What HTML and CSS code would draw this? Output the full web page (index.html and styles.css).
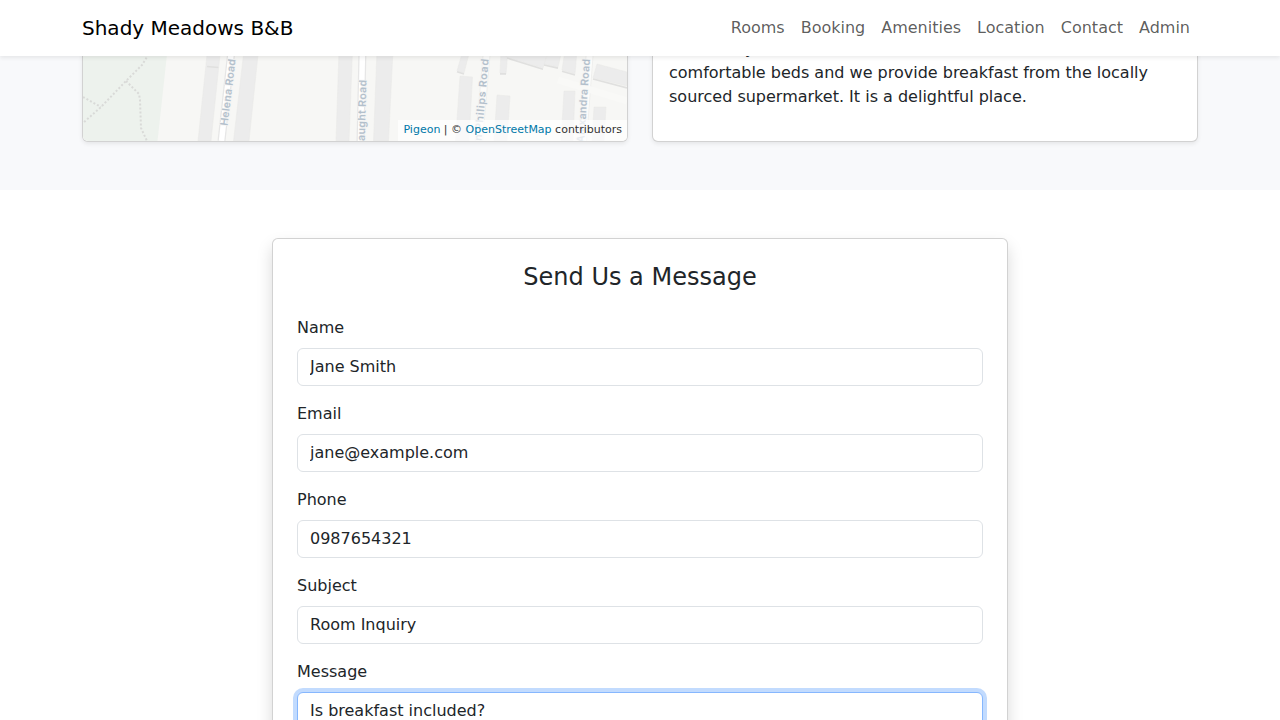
FILE: index.html
```html
<!DOCTYPE html>
<html lang="en">
<head>
<meta charset="utf-8">
<title>Shady Meadows B&amp;B</title>
<link rel="stylesheet" href="styles.css">
</head>
<body>
<nav class="navbar">
  <div class="container navbar-inner">
    <a class="brand">Shady Meadows B&amp;B</a>
    <div class="nav-links">
      <a>Rooms</a><a>Booking</a><a>Amenities</a><a>Location</a><a>Contact</a><a>Admin</a>
    </div>
  </div>
</nav>
<section class="location">
  <div class="container location-row">
    <div class="card map-card">
      <svg class="map" width="544" height="91" viewBox="83 50 544 91">
        <rect x="83" y="50" width="544" height="91" fill="#f7f7f5"/>
        <path d="M83 50H167.500L157.500 141H83Z" fill="#edf2ed"/>
        <g fill="none" stroke="#d9dad8" stroke-width="2" stroke-dasharray="2 2">
          <path d="M149 50L147 57L142 65L126 81L101 107L83 123"/>
          <path d="M126 81L139 94L140 100L141 128L147 141"/>
          <path d="M83 97L101 107"/>
        </g>
        <g fill="none">
          <path d="M231.500 50L221.500 141" stroke="#e6e6e6" stroke-width="8"/>
          <path d="M231.500 50L221.500 141" stroke="#fff" stroke-width="5.500"/>
          <path d="M362.500 50L360.500 141" stroke="#e6e6e6" stroke-width="8"/>
          <path d="M362.500 50L360.500 141" stroke="#fff" stroke-width="5.500"/>
          <path d="M487 50L479 141M590 50L583 141" stroke="#efefed" stroke-width="8"/>
          <path d="M487 50L479 141M590 50L583 141" stroke="#fcfcfb" stroke-width="6"/>
          <path d="M558 80L627 101" stroke="#f9f9f7" stroke-width="7"/>
        </g>
        <g fill="#ececec" stroke="#e8e8e7" stroke-width=".5">
          <path d="M207.500 50H220.500L211 141H198Z"/>
          <path d="M244 50H258.500L249 141H233.500Z"/>
          <path d="M339 50H352.500L349 141H336Z"/>
          <path d="M377 50H393L388.500 141H373.500Z"/>
          <path d="M463 50H470L464 73L457 71Z"/>
          <path d="M460 76L472.500 77L469 141H455.500Z"/>
          <path d="M501 50H508L506 74L500 73Z"/>
          <path d="M497 95L510 96L507 141H494Z"/>
          <path d="M506 50V57L543 68L549 50Z"/>
          <path d="M549 50L544 64L558 67L562 50Z"/>
          <path d="M565 50H577L575 74L562 70Z"/>
          <path d="M564 91H575L573 141H561Z"/>
          <path d="M597 64L627 72V86L593 78Z"/>
          <path d="M594 107H606L604 141H592Z"/>
        </g>
        <path fill="none" stroke="#e0e0df" stroke-width="1.700" d="M207 66.500L218.500 67.500M457 71.800L464 74M500 73.800H506M507 58L543 69.300M544 65L558 68.200M562 71.200L575 75M593 79L627 88"/>
        <g class="road-label">
          <text transform="translate(227.500 126) rotate(-83)" textLength="67">Helena Road</text>
          <text transform="translate(364.800 141) rotate(-88.500)" textLength="61">aught Road</text>
          <text transform="translate(481.500 141) rotate(-85)" textLength="82">n Philips Road</text>
          <text transform="translate(584 143) rotate(-86)" textLength="84">Alexandra Road</text>
        </g>
      </svg>
      <div class="attribution"><a>Pigeon</a> | © <a>OpenStreetMap</a> contributors</div>
    </div>
    <div class="card about-card">
      <p>beautiful you will never want to leave. All our rooms have comfortable beds and we provide breakfast from the locally sourced supermarket. It is a delightful place.</p>
    </div>
  </div>
</section>
<section class="contact">
  <form class="card contact-card">
    <h3>Send Us a Message</h3>
    <div class="field"><label for="name">Name</label><input id="name" type="text" value="Jane Smith"></div>
    <div class="field"><label for="email">Email</label><input id="email" type="text" value="jane@example.com"></div>
    <div class="field"><label for="phone">Phone</label><input id="phone" type="text" value="0987654321"></div>
    <div class="field"><label for="subject">Subject</label><input id="subject" type="text" value="Room Inquiry"></div>
    <div class="field"><label for="message">Message</label><textarea id="message" class="active" rows="5">Is breakfast included?</textarea></div>
  </form>
</section>
</body>
</html>
```
FILE: styles.css
```css
*{box-sizing:border-box}
body{margin:0;height:720px;overflow:hidden;background:#fff;color:#212529;font:16px/1.5 "DejaVu Sans",sans-serif}
.container{width:1116px;margin:0 auto}
.navbar{position:relative;z-index:2;height:56px;background:#fff;box-shadow:0 2px 4px rgba(0,0,0,.075)}
.navbar-inner{height:56px;display:flex;align-items:center;justify-content:space-between}
.brand{font-size:20px;line-height:30px;color:#000}
.nav-links{display:flex;color:rgba(0,0,0,.65)}
.nav-links a{padding:8px}
.location{height:134px;padding-bottom:48px;background:#f8f9fb}
.location-row{height:86px;display:flex;gap:24px;align-items:flex-end}
.card{background:#fff;border:1px solid rgba(0,0,0,.175);border-radius:6px}
.map-card,.about-card{width:546px;height:93px;box-shadow:0 2px 4px rgba(0,0,0,.075)}
.map-card{position:relative;overflow:hidden}
.map{display:block}
.road-label{font:600 10.5px Inter,"Open Sans",sans-serif;fill:#b3c0cc;stroke:#f4f4f3;stroke-width:1.5px;paint-order:stroke}
.attribution{position:absolute;right:0;bottom:0;padding:2px 5px 3px;font-size:11px;line-height:16.5px;background:rgba(255,255,255,.7);color:#333;white-space:nowrap}
.attribution a{color:#0078a8}
.about-card{display:flex;align-items:flex-end;padding:16px}
.about-card p{margin:0 0 16px}
.contact{height:530px;padding-top:48px;overflow:hidden}
.contact-card{width:736px;margin:0 auto;padding:24px;box-shadow:0 8px 16px rgba(0,0,0,.15)}
h3{margin:0 0 24px;text-align:center;font-size:24px;font-weight:500;line-height:28.8px}
.field{margin-bottom:16px}
.field label{display:block;margin-bottom:8px}
.field input,.field textarea{display:block;width:100%;padding:6px 12px;border:1px solid #dee2e6;border-radius:6px;background:#fff;color:#212529;font:inherit;outline:0;resize:none}
.field input{height:38px}
.field textarea.active{border-color:#86b7fe;box-shadow:0 0 0 4px rgba(13,110,253,.25)}
```
